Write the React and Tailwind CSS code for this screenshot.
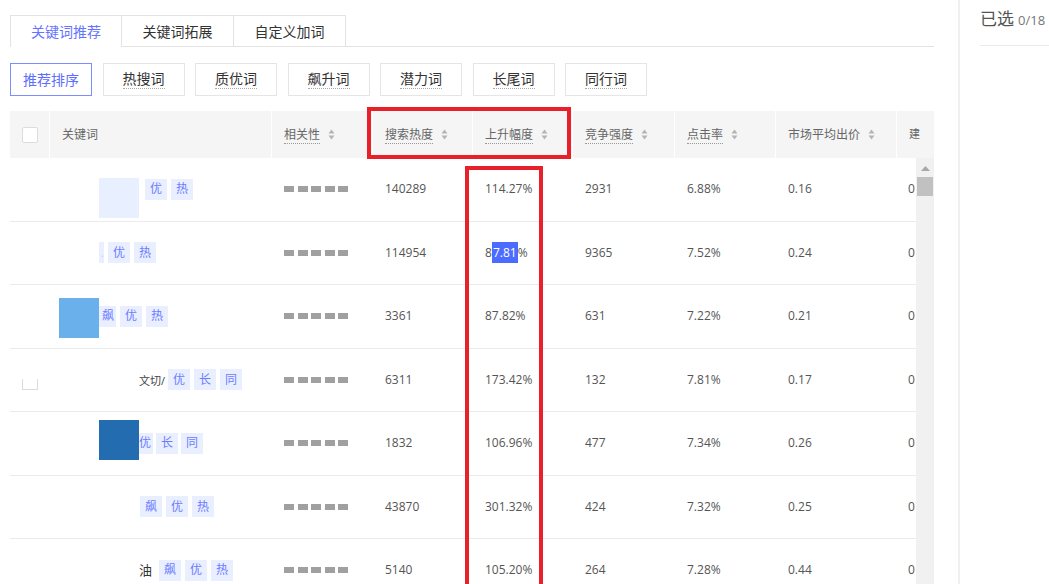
import React from 'react';

const FONT = { fontFamily: '"Open Sans", "Noto Sans CJK SC", sans-serif' };

const cols = [40, 222, 101, 100, 100, 102, 101, 121];

const rows = [
  { heat: '140289', rise: '114.27%', comp: '2931', ctr: '6.88%', bid: '0.16', last: '0.21' },
  { heat: '114954', rise: 'sel', comp: '9365', ctr: '7.52%', bid: '0.24', last: '0.30' },
  { heat: '3361', rise: '87.82%', comp: '631', ctr: '7.22%', bid: '0.21', last: '0.27' },
  { heat: '6311', rise: '173.42%', comp: '132', ctr: '7.81%', bid: '0.17', last: '0.22' },
  { heat: '1832', rise: '106.96%', comp: '477', ctr: '7.34%', bid: '0.26', last: '0.33' },
  { heat: '43870', rise: '301.32%', comp: '424', ctr: '7.32%', bid: '0.25', last: '0.31' },
  { heat: '5140', rise: '105.20%', comp: '264', ctr: '7.28%', bid: '0.44', last: '0.52' },
];

const SortIcon = () => (
  <svg width="7" height="11" viewBox="0 0 7 11" className="ml-[8px]">
    <path d="M3.5 0.5 L6.5 4.5 L0.5 4.5 Z" fill="#b5b5b5" />
    <path d="M3.5 10.5 L6.5 6.5 L0.5 6.5 Z" fill="#b5b5b5" />
  </svg>
);

const Tag = ({ children, w = 'w-[22px]', justify = 'justify-center' }) => (
  <span className={`${w} h-[21px] bg-[#e9efff] text-[#6c7cff] text-[12px] flex items-center ${justify} overflow-hidden shrink-0`}>
    {children}
  </span>
);

const keywordCells = [
  // row 1
  <div className="flex items-center gap-[6px] pl-[49px] h-full">
    <span className="w-[40px] h-[40px] bg-[#e8efff] self-start mt-[20px] shrink-0" />
    <div className="flex gap-[4px]">
      <Tag>优</Tag>
      <Tag>热</Tag>
    </div>
  </div>,
  // row 2
  <div className="flex items-center gap-[4px] pl-[49px] h-full">
    <Tag w="w-[5px]" justify="justify-end">
      <span className="text-[#c7d0ff]">.</span>
    </Tag>
    <Tag>优</Tag>
    <Tag>热</Tag>
  </div>,
  // row 3
  <div className="flex items-center pl-[9px] h-full">
    <span className="w-[40px] h-[40px] bg-[#6ab0ea] self-start mt-[13px] shrink-0" />
    <div className="flex gap-[4px]">
      <Tag w="w-[17px]" justify="justify-end">
        <span className="pr-[2px]">飙</span>
      </Tag>
      <Tag>优</Tag>
      <Tag>热</Tag>
    </div>
  </div>,
  // row 4
  <div className="flex items-center pl-[89px] h-full">
    <span className="text-[11px] text-[#444] w-[29px] shrink-0 mt-[2px]">文切/</span>
    <div className="flex gap-[4px]">
      <Tag>优</Tag>
      <Tag>长</Tag>
      <Tag>同</Tag>
    </div>
  </div>,
  // row 5
  <div className="flex items-center pl-[49px] h-full">
    <span className="w-[40px] h-[40px] bg-[#236cb0] self-start mt-[8px] shrink-0" />
    <div className="flex gap-[3px]">
      <Tag w="w-[14px]" justify="justify-end">
        <span className="pr-[2px]">优</span>
      </Tag>
      <Tag>长</Tag>
      <Tag>同</Tag>
    </div>
  </div>,
  // row 6
  <div className="flex items-center gap-[4px] pl-[90px] h-full">
    <Tag>飙</Tag>
    <Tag>优</Tag>
    <Tag>热</Tag>
  </div>,
  // row 7
  <div className="flex items-center pl-[89px] h-full">
    <span className="text-[13px] text-[#333] w-[20px] shrink-0">油</span>
    <div className="flex gap-[4px]">
      <Tag>飙</Tag>
      <Tag>优</Tag>
      <Tag>热</Tag>
    </div>
  </div>,
];

const HeadCell = ({ w, label, sort = true, underline = true }) => (
  <div
    className="h-full flex items-center pl-[12px] shrink-0 overflow-hidden border-r border-white"
    style={{ width: w }}
  >
    <span className={underline ? 'border-b border-dotted border-[#999] leading-[17px]' : 'leading-[17px]'}>
      {label}
    </span>
    {sort && <SortIcon />}
  </div>
);

const Relevance = () => (
  <div className="flex gap-[3.5px]">
    {[0, 1, 2, 3, 4].map((i) => (
      <span key={i} className="w-[10px] h-[6px] bg-[#a0a0a0]" />
    ))}
  </div>
);

const Cell = ({ w, children }) => (
  <div className="h-full flex items-center pl-[12px] shrink-0" style={{ width: w }}>
    {children}
  </div>
);

const filters = ['热搜词', '质优词', '飙升词', '潜力词', '长尾词', '同行词'];

export default function App() {
  return (
    <div className="w-[1049px] h-[584px] overflow-hidden bg-white flex relative" style={FONT}>
      {/* left main */}
      <div className="w-[958px] shrink-0 pl-[10px] pt-[15px] flex flex-col">
        {/* tabs */}
        <div className="w-[924px] flex h-[32px] shrink-0">
          <div className="w-[112px] border-l border-t border-r border-[#e3e3e3] flex items-center justify-center text-[14px] text-[#6474ff]">
            关键词推荐
          </div>
          <div className="w-[112px] border-t border-r border-b border-[#e3e3e3] flex items-center justify-center text-[14px] text-[#333]">
            关键词拓展
          </div>
          <div className="w-[112px] border-t border-r border-b border-[#e3e3e3] flex items-center justify-center text-[14px] text-[#333]">
            自定义加词
          </div>
          <div className="flex-1 border-b border-[#e3e3e3]" />
        </div>

        {/* filters */}
        <div className="flex gap-[10.5px] mt-[16px] shrink-0">
          <div className="w-[82px] h-[33px] border border-[#7d8cff] flex items-center justify-center text-[14px] text-[#5d6dff]">
            推荐排序
          </div>
          {filters.map((f) => (
            <div
              key={f}
              className="w-[82px] h-[33px] border border-[#e5e5e5] flex items-center justify-center text-[14px] text-[#333]"
            >
              <span className="border-b border-dotted border-[#aaa] leading-[18px]">{f}</span>
            </div>
          ))}
        </div>

        {/* table */}
        <div className="w-[924px] mt-[15px] flex flex-col shrink-0">
          <div className="h-[47px] bg-[#f5f5f5] flex text-[12px] text-[#666] shrink-0">
            <div className="w-[40px] h-full flex items-center justify-center border-r border-white shrink-0">
              <span className="w-[16px] h-[16px] bg-white border border-[#dcdcdc] rounded-[2px]" />
            </div>
            <HeadCell w={cols[1]} label="关键词" sort={false} underline={false} />
            <HeadCell w={cols[2]} label="相关性" />
            <HeadCell w={cols[3]} label="搜索热度" />
            <HeadCell w={cols[4]} label="上升幅度" />
            <HeadCell w={cols[5]} label="竞争强度" />
            <HeadCell w={cols[6]} label="点击率" />
            <HeadCell w={cols[7]} label="市场平均出价" underline={false} />
            <div className="flex-1 h-full flex items-center pl-[12px] overflow-hidden text-[11px]">建</div>
          </div>

          <div className="flex shrink-0">
            <div className="w-[906px] flex flex-col text-[12px] text-[#555]">
              {rows.map((r, i) => (
                <div key={i} className="h-[63.5px] border-b border-[#ebebeb] flex shrink-0">
                  <div className="w-[40px] h-full shrink-0 flex items-center justify-center">
                    {i === 3 && (
                      <span className="w-[16px] h-[11px] mt-[9px] border-l border-r border-b border-[#dcdcdc]" />
                    )}
                  </div>
                  <div className="w-[222px] h-full shrink-0">{keywordCells[i]}</div>
                  <Cell w={cols[2]}>
                    <Relevance />
                  </Cell>
                  <Cell w={cols[3]}>{r.heat}</Cell>
                  <Cell w={cols[4]}>
                    {r.rise === 'sel' ? (
                      <span className="flex items-center">
                        8
                        <span className="bg-[#4b6cff] text-white h-[21px] flex items-center px-[1px]">7.81</span>
                        %
                      </span>
                    ) : (
                      r.rise
                    )}
                  </Cell>
                  <Cell w={cols[5]}>{r.comp}</Cell>
                  <Cell w={cols[6]}>{r.ctr}</Cell>
                  <Cell w={cols[7]}>{r.bid}</Cell>
                  <div className="w-[19px] h-full flex items-center pl-[11px] overflow-hidden shrink-0">
                    <span>{r.last.charAt(0)}</span>
                  </div>
                </div>
              ))}
            </div>
            {/* scrollbar */}
            <div className="w-[18px] h-[430px] bg-[#f1f1f1] flex flex-col items-center pt-[8px] shrink-0">
              <svg width="9" height="5" viewBox="0 0 9 5">
                <path d="M4.5 0 L9 5 L0 5 Z" fill="#a8a8a8" />
              </svg>
              <span className="w-[16px] h-[19px] bg-[#c1c1c1] mt-[6px]" />
            </div>
          </div>
        </div>
      </div>

      {/* right panel */}
      <div className="flex-1 border-l-2 border-[#f0f0f0] pl-[20px]">
        <div className="h-[46px] border-b border-[#ebebeb] flex items-start pt-[6px]">
          <span className="text-[17px] text-[#555] leading-[25px]">已选</span>
          <span className="text-[13px] text-[#777] ml-[4px] leading-[25px] mt-[2px]">0/18</span>
        </div>
      </div>

      {/* red annotation boxes */}
      <div className="absolute left-[367px] top-[107px] w-[204px] h-[52px] border-[4px] border-[#e8202a]" />
      <div className="absolute left-[465px] top-[166px] w-[78px] h-[440px] border-[4px] border-[#e8202a]" />
    </div>
  );
}
